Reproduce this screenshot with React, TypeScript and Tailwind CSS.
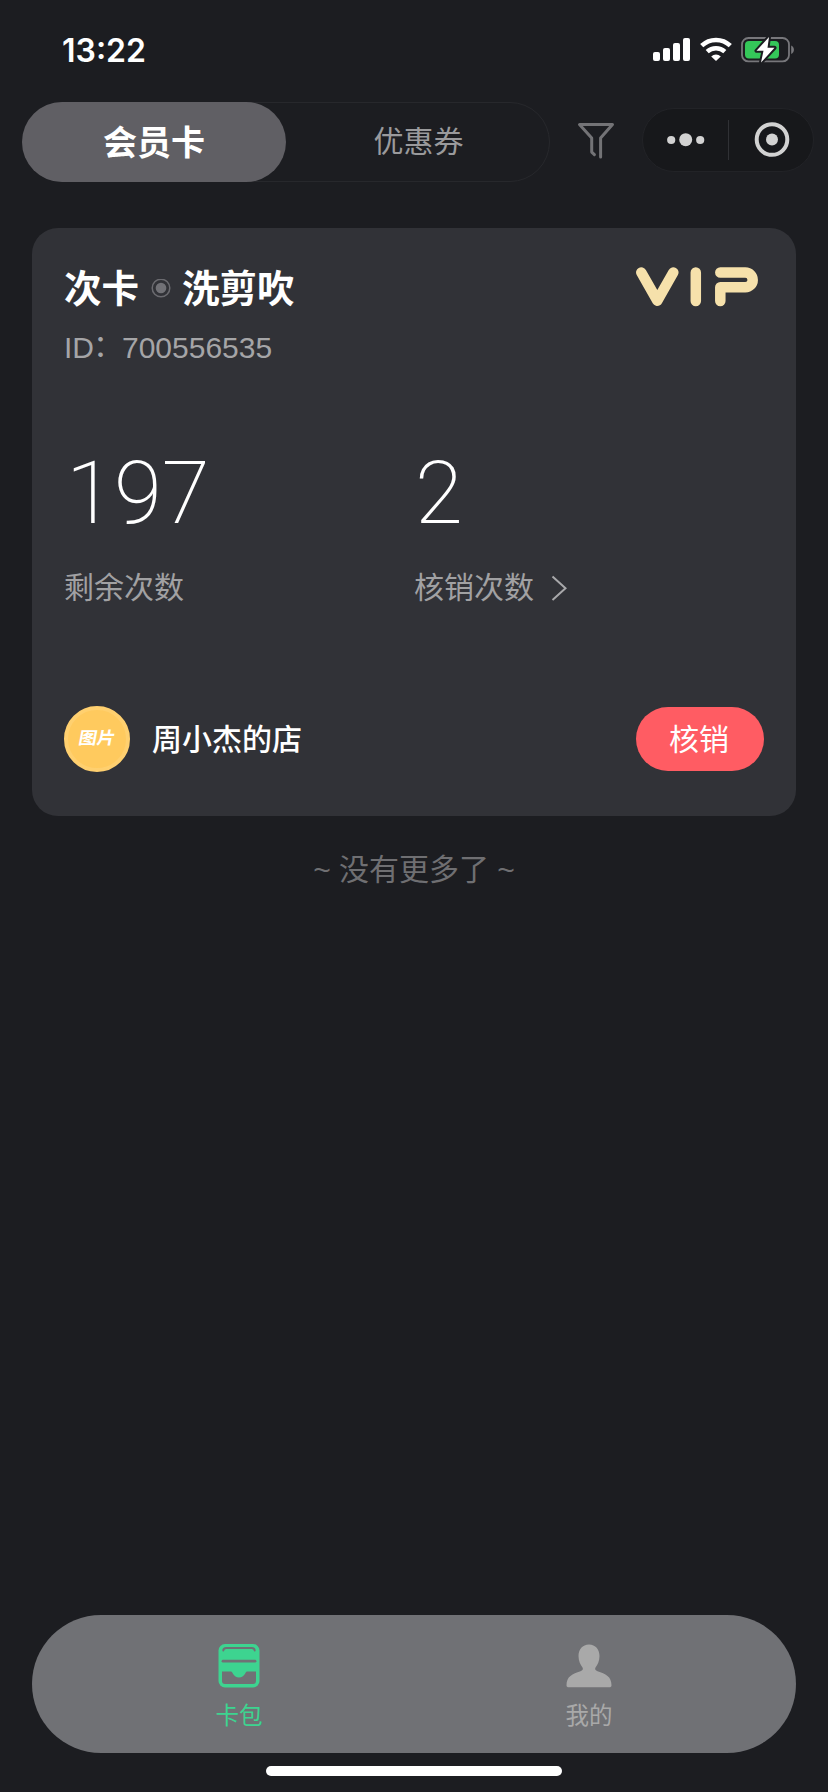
const SANS = "font-['Liberation_Sans','Noto_Sans_CJK_SC',sans-serif]";

function StatusBar() {
  return (
    <header className="flex h-[102px] items-start justify-between pr-[34px] pl-[62px]">
      <span className="mt-[29.500px] font-['Inter',sans-serif] text-[32px] leading-[42px] font-semibold text-white">13:22</span>
      <div className="mt-[37px] flex items-start">
        <svg width="38" height="24" viewBox="0 0 38 24" fill="#fff">
          <rect x="0" y="15" width="7" height="9" rx="2" />
          <rect x="10" y="11" width="7" height="13" rx="2" />
          <rect x="20" y="6" width="7" height="18" rx="2" />
          <rect x="30" y="1" width="7" height="23" rx="2" />
        </svg>
        <svg className="ml-[9px]" width="32" height="24" viewBox="0 0 32 24" fill="none" stroke="#fff">
          <path d="M1.700 8.700a20.500 20.500 0 0 1 28.600 0" strokeWidth="4.500" />
          <path d="M7.200 14.700a12.800 12.800 0 0 1 17.600 0" strokeWidth="4.400" />
          <path d="M16 24l-4.800-4.600a7 7 0 0 1 9.600 0z" fill="#fff" stroke="none" />
        </svg>
        <svg className="ml-[9px]" width="53" height="26" viewBox="0 0 53 26" fill="none">
          <rect x="1" y="1" width="47" height="23.400" rx="6.500" stroke="#77777b" strokeWidth="1.800" />
          <rect x="4" y="4" width="34" height="17.400" rx="4" fill="#34c759" />
          <path d="M50.200 8.500c3.600 1.400 3.600 7 0 8.400z" fill="#77777b" />
          <path d="M28 0 15.500 13.800h7L20 25.500 33.500 10.800h-7z" fill="#fff" stroke="#1c1d21" strokeWidth="4" strokeLinejoin="round" />
          <path d="M28 0 15.500 13.800h7L20 25.500 33.500 10.800h-7z" fill="#fff" />
        </svg>
      </div>
    </header>
  );
}

function TopNav() {
  return (
    <nav className="flex h-20 items-start pl-[22px]">
      <div className="flex h-20 w-[528px] rounded-full border border-[#27282c]">
        <div className="-m-px flex h-20 w-[264px] items-center justify-center rounded-full bg-[#605f64] pt-[3px] text-[34px] font-bold text-white">
          会员卡
        </div>
        <div className="flex flex-1 items-center justify-center pb-px pl-[3px] text-[30px] text-[#9a9a9c]">优惠券</div>
      </div>
      <svg className="mt-5 ml-[27px]" width="38" height="38" viewBox="0 0 38 38" fill="none" stroke="#737376" strokeWidth="3" strokeLinecap="round" strokeLinejoin="round">
        <path d="M17.400 32.700l-2.700-2.600V16L2.500 2.500h33L23.600 16v19" />
      </svg>
      <div className="mt-[6px] ml-[27px] flex h-16 w-[172px] items-center rounded-full border border-[#222327] bg-[#17181b]">
        <svg className="ml-6" width="38" height="14" viewBox="0 0 38 14" fill="#d2d2d2">
          <circle cx="4.200" cy="7" r="4.100" />
          <circle cx="18.700" cy="6.700" r="6.500" />
          <circle cx="33.200" cy="7" r="4.100" />
        </svg>
        <span className="ml-[23px] h-10 w-px bg-[#303135]" />
        <svg className="ml-[25px]" width="36" height="36" viewBox="0 0 36 36" fill="none">
          <circle cx="18" cy="17.500" r="15.300" stroke="#d2d2d2" strokeWidth="4" />
          <circle cx="18" cy="17.500" r="6" fill="#d2d2d2" />
        </svg>
      </div>
    </nav>
  );
}

function MemberCard() {
  return (
    <section className="mx-8 mt-[46px] h-[588px] rounded-[26px] bg-[#313237] px-8">
      <div className="flex h-[87px] items-end justify-between">
        <h1 className="flex items-center text-[37.500px] leading-[52px] font-bold text-white">
          次卡
          <svg className="mr-[11px] ml-[12px]" width="20" height="20" viewBox="0 0 20 20">
            <circle cx="10" cy="9" r="8.800" fill="none" stroke="#6b6b70" strokeWidth="1.500" />
            <circle cx="10" cy="9" r="5.300" fill="#717176" />
          </svg>
          洗剪吹
        </h1>
        <svg className="mr-[5px] mb-[8px]" width="124" height="40" viewBox="0 0 124 40" fill="none" stroke="#f6e1ab" strokeWidth="10.500" strokeLinecap="round" strokeLinejoin="round">
          <path d="M6.300 5.500 22.300 33.700 38.300 5.500M60.800 5.500v28.500M85.300 5.500h25a7.400 7.400 0 0 1 0 14.800H85.300v13.700" />
        </svg>
      </div>
      <p className="mt-[13px] text-[30px] leading-10 text-[#a5a5a7]">
        ID<span className="relative -top-[2px] mr-[-1px] ml-[-1px]">：</span>700556535
      </p>
      <div className="mt-[75px] flex font-extralight text-white">
        <div className="w-[350px]">
          <div className="pl-[2px] font-['Roboto',sans-serif] text-[87px] leading-[100px]">197</div>
          <div className="mt-[25px] text-[30px] leading-10 font-normal text-[#a1a1a3]">剩余次数</div>
        </div>
        <div>
          <div className="pl-px font-['Roboto',sans-serif] text-[87px] leading-[100px]">2</div>
          <div className="mt-[25px] flex items-center text-[30px] leading-10 font-normal text-[#a1a1a3]">
            核销次数
            <svg className="ml-[17px]" width="18" height="26" viewBox="0 0 18 26" fill="none" stroke="#a8a8aa" strokeWidth="2">
              <path d="M1.500 1.500 14.500 13.300 1.500 25" />
            </svg>
          </div>
        </div>
      </div>
      <div className="mt-[98px] flex h-[66px] items-center">
        <div className="flex size-[66px] items-center justify-center rounded-full border-[4px] border-[#ffd06f] bg-[#ffca5e]">
          <span className="scale-x-108 -skew-x-10 text-[17px] font-bold text-white">图片</span>
        </div>
        <span className="ml-[22px] text-[30px] font-medium text-white">周小杰的店</span>
        <button className="ml-auto h-16 w-32 rounded-full bg-[#ff5c63] pr-[2px] text-[30px] text-white">核销</button>
      </div>
    </section>
  );
}

function TabBar() {
  return (
    <footer className="mt-auto px-8 pb-4">
      <div className="flex h-[138px] rounded-full bg-[#707175] pr-8 pl-8">
        <div className="flex w-[350px] flex-col items-center pt-[29px] text-[#3dd490]">
          <svg width="42" height="44" viewBox="0 0 42 44">
            <rect x="0.500" y="0" width="41" height="43.500" rx="6.500" fill="#3dd490" />
            <path d="M5.300 6.500q0-2.500 3-2.500h25.400q3 0 3 2.500" fill="none" stroke="#707175" strokeWidth="2" strokeLinecap="round" />
            <path d="M5 17.200h32" stroke="#707175" strokeWidth="2.800" strokeLinecap="round" />
            <path d="M4 27.500H13c2 0 2 6 8 6s6-6 8-6h9v9.500a3 3 0 0 1-3 3h-28a3 3 0 0 1-3-3z" fill="#707175" />
          </svg>
          <span className="mt-[11px] text-[23.500px] leading-[34px]">卡包</span>
        </div>
        <div className="flex w-[350px] flex-col items-center pt-[29px] text-[#a9a9a9]">
          <svg width="46" height="44" viewBox="0 0 46 44" fill="#a9a9a9">
            <path d="M23 .500c6.500 0 10.500 5 10.500 11.500 0 5-2 9-4 11.500-1 2 0 3 2 3.700 8 2.800 14 5 14 14 0 1.500-.800 2-2.500 2H3c-1.700 0-2.500-.500-2.500-2 0-9 6-11.200 14-14 2-.700 3-1.700 2-3.700-2-2.500-4-6.500-4-11.500C12.500 5.500 16.500.500 23 .500z" />
          </svg>
          <span className="mt-[11px] text-[23.500px] leading-[34px]">我的</span>
        </div>
      </div>
      <div className="mx-auto mt-[13px] h-[10px] w-[296px] rounded-full bg-white" />
    </footer>
  );
}

export default function App() {
  return (
    <main className={`${SANS} flex h-[1792px] w-[828px] flex-col overflow-hidden bg-[#1c1d21]`}>
      <StatusBar />
      <TopNav />
      <MemberCard />
      <p className="mt-[34px] text-center text-[30px] leading-10 text-[#6f6f72]">~ 没有更多了 ~</p>
      <TabBar />
    </main>
  );
}
